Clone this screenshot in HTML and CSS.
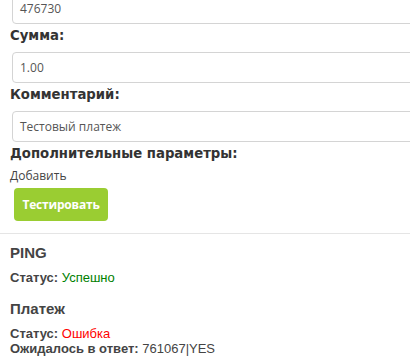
FILE: index.html
```html
<!DOCTYPE html>
<html>
<head>
<meta charset="utf-8">
<link rel="stylesheet" href="styles.css">
</head>
<body>
<div class="page">
  <form class="form">
    <div class="field"><div class="input">476730</div></div>
    <label class="label">Сумма:</label>
    <div class="field"><div class="input">1.00</div></div>
    <label class="label">Комментарий:</label>
    <div class="field"><div class="input">Тестовый платеж</div></div>
    <label class="label label-last">Дополнительные параметры:</label>
    <div class="add">Добавить</div>
    <button class="btn" type="button">Тестировать</button>
  </form>
  <div class="results">
    <div class="block">
      <h3 class="title">PING</h3>
      <div class="row"><b>Статус:</b> <span class="ok">Успешно</span></div>
    </div>
    <div class="block">
      <h3 class="title">Платеж</h3>
      <div class="row"><b>Статус:</b> <span class="err">Ошибка</span></div>
      <div class="row"><b>Ожидалось в ответ:</b> 761067|YES</div>
    </div>
  </div>
</div>
</body>
</html>
```

FILE: styles.css
```css
html, body {
  margin: 0;
  padding: 0;
  background: #fff;
  overflow: hidden;
}
.page {
  width: 410px;
  height: 358px;
  overflow: hidden;
}
.form {
  display: flex;
  flex-direction: column;
  align-items: flex-start;
  padding: 0 0 12px 10px;
  margin-top: -7px;
  border-bottom: 1px solid #e5e5e5;
}
.field {
  box-sizing: border-box;
  padding-left: 2px;
  width: 420px;
}
.input {
  display: flex;
  align-items: center;
  box-sizing: border-box;
  width: 100%;
  height: 31px;
  border: 1px solid #d4d4d4;
  border-radius: 4px;
  padding: 0 0 0 7px;
  font-family: "Open Sans", sans-serif;
  font-size: 12px;
  color: #555;
  background: #fff;
}
.label {
  font-family: "DejaVu Sans", Verdana, sans-serif;
  font-weight: bold;
  font-size: 13.25px;
  color: #333;
  line-height: 16px;
  margin: 4px 0 8px;
}
.label-last {
  margin-bottom: 6px;
}
.add {
  font-family: "Open Sans", sans-serif;
  font-size: 12px;
  color: #444;
  line-height: 16px;
}
.btn {
  margin: 4px 0 0 4px;
  width: 94px;
  height: 33px;
  border: none;
  border-radius: 4px;
  background: #9acd32;
  color: #fff;
  font-family: "Open Sans", sans-serif;
  font-weight: bold;
  font-size: 12px;
  padding: 0;
  letter-spacing: -0.2px;
}
.results {
  padding: 9px 0 0 10px;
  font-family: "Liberation Sans", Arial, sans-serif;
  color: #444;
}
.block {
  margin-bottom: 14px;
}
.title {
  margin: 0 0 7px;
  font-size: 15px;
  font-weight: bold;
  line-height: 20px;
}
.row {
  font-size: 13px;
  line-height: 15px;
}
.ok { color: #008000; }
.err { color: #ff0000; }
```
